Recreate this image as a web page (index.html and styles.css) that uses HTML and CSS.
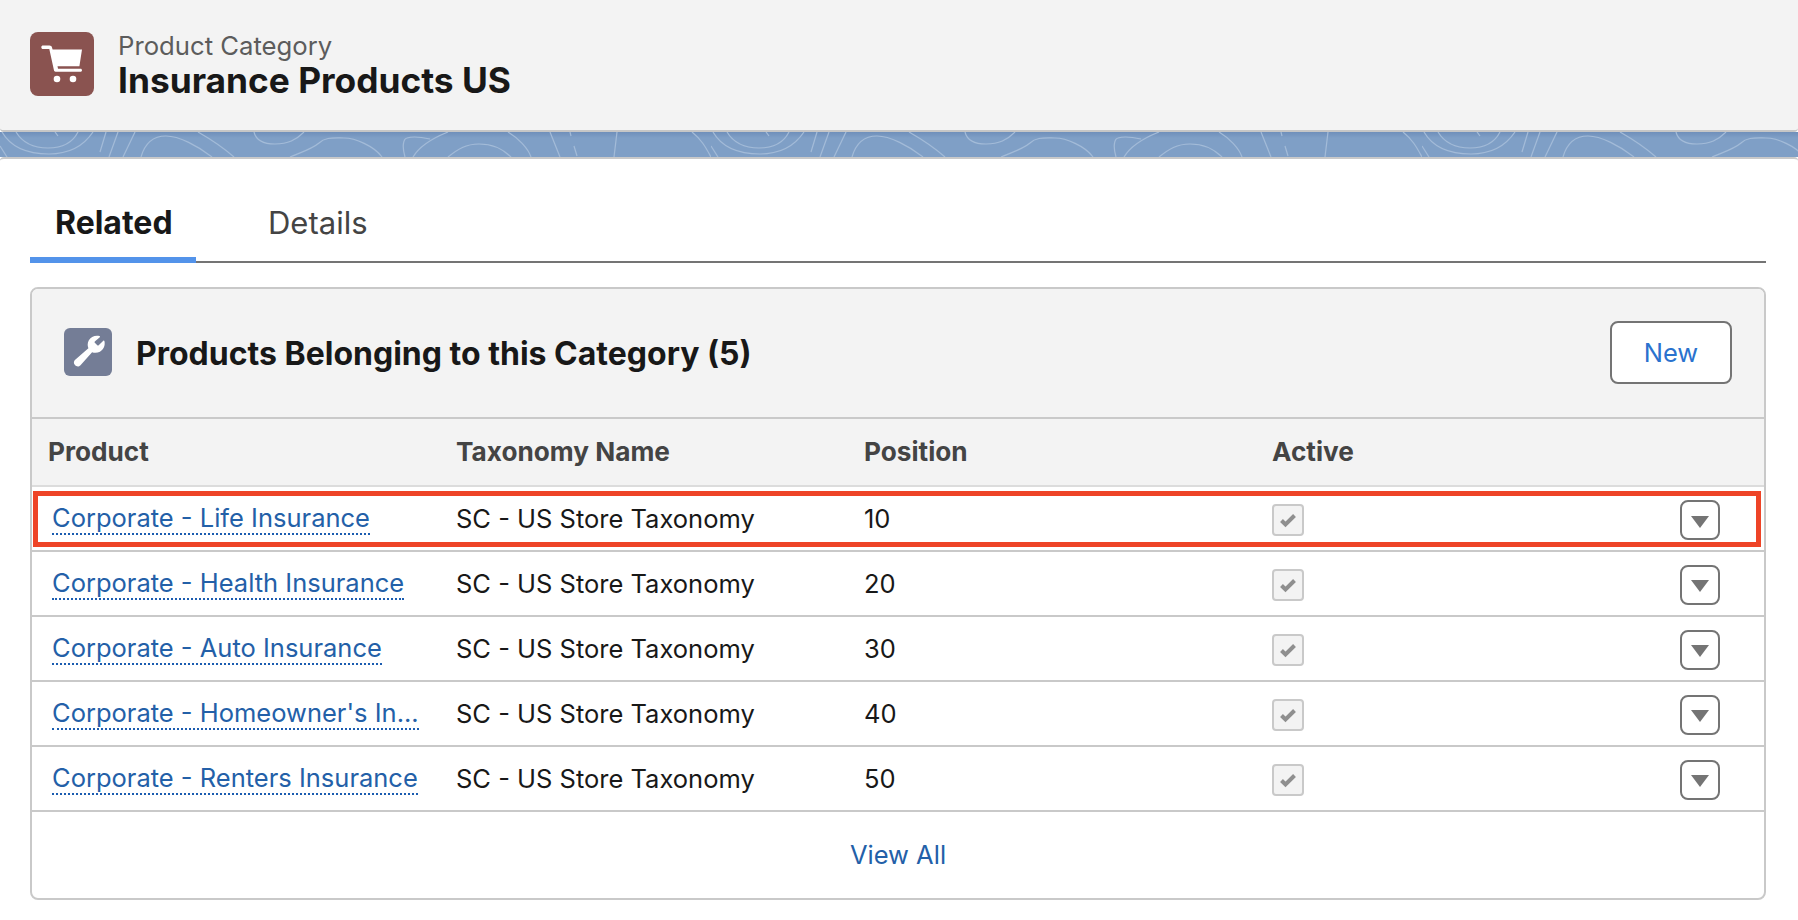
FILE: index.html
```html
<!DOCTYPE html>
<html lang="en">
<head>
<meta charset="utf-8">
<title>Insurance Products US</title>
<link rel="stylesheet" href="styles.css">
</head>
<body>
<header class="page-header">
  <span class="record-icon">
    <svg viewBox="0 0 64 64" width="64" height="64"><path fill="#fff" d="M13 13.500h6.500c1.200 0 2.200.7 2.500 1.900l.6 2.100H52l-2.600 16.800H27.500l.5 2.400h22.500c.9 0 1.500.7 1.500 1.500s-.6 1.500-1.500 1.500H25.500c-.8 0-1.300-.5-1.500-1.200L19.300 17H13c-1 0-1.700-.8-1.700-1.800s.7-1.700 1.700-1.700z"/><circle cx="27" cy="47" r="3.300" fill="#fff"/><circle cx="43" cy="47" r="3.300" fill="#fff"/></svg>
  </span>
  <div class="record-titles">
    <div class="record-type">Product Category</div>
    <h1 class="record-name">Insurance Products US</h1>
  </div>
</header>
<div class="banner">
  <svg class="banner-art" width="100%" height="25">
    <defs>
      <pattern id="topo" width="711" height="25" patternUnits="userSpaceOnUse">
        <g fill="none" stroke="#a3bbd8" stroke-width="1.200">
          <path d="M2 0c8 14 24 22 47 22s36-10 44-22"/>
          <path d="M16 0c6 10 17 16 32 16s25-6 30-16"/>
          <path d="M55 0l3 4"/>
          <path d="M0 14l7 11"/>
          <path d="M106 0l-6 20M118 0l-9 25M135 0l-12 25"/>
          <path d="M141 25c4-14 12-21 25-21s32 10 46 21"/>
          <path d="M198 0c14 8 28 18 36 25"/>
          <path d="M254 0c2 8 8 12 21 12s21-4 29-12"/>
          <path d="M290 25c12-5 22-8 29-14 6-6 14-5 25-5s30 8 38 19"/>
          <path d="M405 25c-3-10-2-18 2-19 6-2 14-1 23 1"/>
          <path d="M413 25c6-10 20-19 35-25"/>
          <path d="M448 25c10-8 18-13 31-13s24 5 32 13"/>
          <path d="M508 0c10 6 20 16 23 25M550 0l10 25M570 0l1 4M574 14l3 10M617 0l-3 25"/>
          <path d="M692 0c10 8 14 16 19 25"/>
        </g>
      </pattern>
    </defs>
    <rect width="100%" height="25" fill="url(#topo)"/>
  </svg>
</div>
<main class="panel">
  <nav class="tabs">
    <a class="tab tab-active">Related</a>
    <a class="tab">Details</a>
  </nav>
  <section class="card">
    <div class="card-head">
      <span class="card-icon">
        <svg viewBox="0 0 48 48" width="48" height="48"><path fill="#fff" d="M35.800 9.200c.4-.4.2-1-.3-1.100-4.300-1-8.800.7-10.800 4.500-1.300 2.500-1.300 5.300-.3 7.700L11.200 31.800c-2.300 2.200-1 4.500 0 5.500s3.300 2 5.300-.1l11.600-13c2.500 1 5.300.8 7.800-.5 3.700-2 5.600-6.500 4.500-10.700-.1-.5-.8-.7-1.100-.3l-4.600 4.600c-.4.400-1 .4-1.400 0l-2.500-2.500c-.4-.4-.4-1 0-1.400z"/></svg>
      </span>
      <h2 class="card-title">Products Belonging to this Category (5)</h2>
      <button class="btn-new">New</button>
    </div>
    <div class="row row-head">
      <div class="cell">Product</div>
      <div class="cell">Taxonomy Name</div>
      <div class="cell">Position</div>
      <div class="cell">Active</div>
    </div>
    <div class="row row-body">
      <div class="cell cell-link"><a class="link">Corporate - Life Insurance</a></div>
      <div class="cell">SC - US Store Taxonomy</div>
      <div class="cell">10</div>
      <div class="cell"><span class="check"><svg viewBox="0 0 20 20" width="20" height="20"><path fill="none" stroke="#8f8f8f" stroke-width="4" d="M3.500 10.500l4 4 9-9"/></svg></span></div>
      <button class="menu-btn"><span class="caret"></span></button>
      <div class="highlight"></div>
    </div>
    <div class="row row-body">
      <div class="cell cell-link"><a class="link">Corporate - Health Insurance</a></div>
      <div class="cell">SC - US Store Taxonomy</div>
      <div class="cell">20</div>
      <div class="cell"><span class="check"><svg viewBox="0 0 20 20" width="20" height="20"><path fill="none" stroke="#8f8f8f" stroke-width="4" d="M3.500 10.500l4 4 9-9"/></svg></span></div>
      <button class="menu-btn"><span class="caret"></span></button>
    </div>
    <div class="row row-body">
      <div class="cell cell-link"><a class="link">Corporate - Auto Insurance</a></div>
      <div class="cell">SC - US Store Taxonomy</div>
      <div class="cell">30</div>
      <div class="cell"><span class="check"><svg viewBox="0 0 20 20" width="20" height="20"><path fill="none" stroke="#8f8f8f" stroke-width="4" d="M3.500 10.500l4 4 9-9"/></svg></span></div>
      <button class="menu-btn"><span class="caret"></span></button>
    </div>
    <div class="row row-body">
      <div class="cell cell-link"><a class="link">Corporate - Homeowner's In...</a></div>
      <div class="cell">SC - US Store Taxonomy</div>
      <div class="cell">40</div>
      <div class="cell"><span class="check"><svg viewBox="0 0 20 20" width="20" height="20"><path fill="none" stroke="#8f8f8f" stroke-width="4" d="M3.500 10.500l4 4 9-9"/></svg></span></div>
      <button class="menu-btn"><span class="caret"></span></button>
    </div>
    <div class="row row-body">
      <div class="cell cell-link"><a class="link">Corporate - Renters Insurance</a></div>
      <div class="cell">SC - US Store Taxonomy</div>
      <div class="cell">50</div>
      <div class="cell"><span class="check"><svg viewBox="0 0 20 20" width="20" height="20"><path fill="none" stroke="#8f8f8f" stroke-width="4" d="M3.500 10.500l4 4 9-9"/></svg></span></div>
      <button class="menu-btn"><span class="caret"></span></button>
    </div>
    <div class="card-foot"><a class="view-all">View All</a></div>
  </section>
</main>
</body>
</html>
```
FILE: styles.css
```css
* { box-sizing: border-box; }
html, body { margin: 0; padding: 0; height: 100%; overflow: hidden; }
body { font-family: Inter, "Liberation Sans", sans-serif; background: #fff; color: #181818; }

.page-header {
  height: 132px;
  padding: 32px 30px 0;
  display: flex;
  gap: 24px;
  background: #f3f3f3;
  border-bottom: 2px solid #c6c6c6;
  border-radius: 0 0 4px 4px;
}
.record-icon { width: 64px; height: 64px; border-radius: 8px; background: #8a5350; display: block; flex: none; }
.record-icon svg { display: block; }
.record-titles { display: flex; flex-direction: column; }
.record-type { font-size: 25.7px; line-height: 28px; color: #5c5c5c; }
.record-name { margin: 0; font-size: 35.3px; line-height: 42px; font-weight: 700; color: #181818; }

.banner { height: 25px; background: linear-gradient(#6f8fba, #7f9fc6 6px); }
.banner-art { display: block; }

.panel {
  border-top: 2px solid #c9c9c9;
  border-radius: 4px 4px 0 0;
  padding: 0 32px 0 30px;
  background: #fff;
}
.tabs {
  display: flex;
  height: 104px;
  border-bottom: 2px solid #747474;
}
.tab { width: 166px; height: 104px; padding: 40px 0 0 21px; font-size: 31px; line-height: 48px; color: #444; white-space: nowrap; }
.tab-active { font-size: 32px; padding-left: 25px; font-weight: 700; color: #181818; border-bottom: 6px solid #5393ea; margin-right: 51px; }

.card {
  margin-top: 24px;
  border: 2px solid #c9c9c9;
  border-radius: 8px;
  height: 613px;
  overflow: hidden;
  background: #fff;
}
.card-head {
  height: 130px;
  background: #f3f3f3;
  border-bottom: 2px solid #c9c9c9;
  display: flex;
  align-items: center;
  padding: 0 32px;
  gap: 25px;
}
.card-icon { width: 48px; height: 48px; border-radius: 6px; background: #747d96; flex: none; margin-top: -2px; }
.card-icon svg { display: block; }
.card-title { margin: 0; flex: 1; font-size: 32px; font-weight: 700; color: #181818; margin-left: -1px; }
.btn-new {
  width: 122px; height: 63px; margin-top: -2px;
  border: 2px solid #747474; border-radius: 8px;
  background: #fff; color: #2a72ce;
  font: 400 25.5px Inter, "Liberation Sans", sans-serif;
}

.row { display: grid; grid-template-columns: 408px 408px 408px 1fr; align-items: center; position: relative; }
.row-head { height: 68px; padding-bottom: 2px; background: #f3f3f3; border-bottom: 2px solid #dcdcdc; font-size: 26.2px; font-weight: 700; color: #444; padding-left: 16px; }
.row-body { height: 65px; border-bottom: 2px solid #c9c9c9; font-size: 25.5px; color: #181818; padding-left: 16px; }
.row-head + .row-body { height: 64.5px; }
.cell { white-space: nowrap; }
.cell-link { padding-left: 4px; min-width: 0; }
.link {
  display: inline-block; vertical-align: top;
  color: #2360a8; border-bottom: 2px dotted #1b5cb0; line-height: 31px;
}
.check {
  display: flex; align-items: center; justify-content: center;
  width: 32px; height: 32px; margin-top: 3px;
  border: 2px solid #c9c9c9; border-radius: 4px; background: #f3f3f3;
}
.menu-btn {
  position: absolute; right: 44px; top: 13px;
  width: 40px; height: 40px; padding: 0;
  display: flex; align-items: center; justify-content: center;
  background: #fff; border: 2px solid #747474; border-radius: 8px;
}
.caret { display: block; width: 0; height: 0; margin-top: 3px; border-left: 9.500px solid transparent; border-right: 9.500px solid transparent; border-top: 12px solid #747474; }
.highlight { position: absolute; left: 1px; right: 3px; top: 4px; bottom: 3px; border: 5px solid #ee4427; pointer-events: none; }

.card-foot { height: 87.500px; display: flex; justify-content: center; align-items: center; padding-bottom: 2px; }
.view-all { font-size: 25.5px; color: #2360a8; }
```
